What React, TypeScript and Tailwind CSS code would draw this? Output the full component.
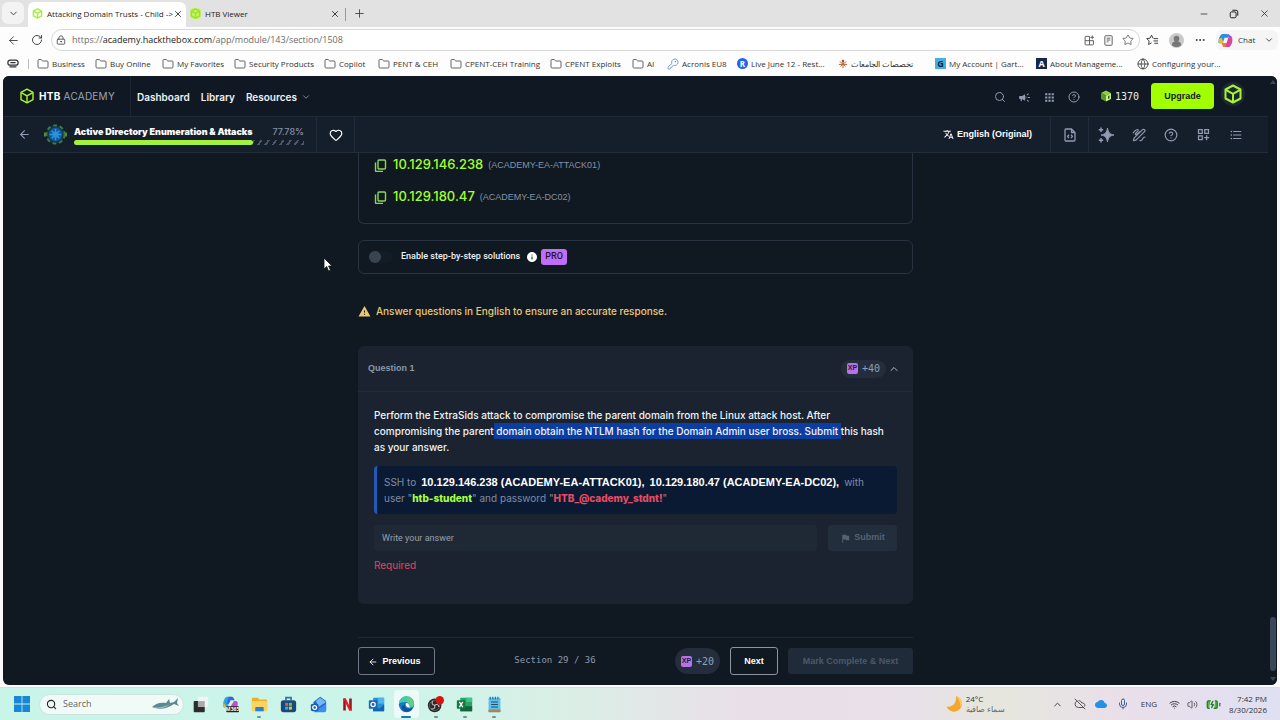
import type { ReactNode } from 'react';
import {
  ArrowLeft, BatteryCharging, ChevronDown, ChevronUp, CircleHelp, CloudOff, Ellipsis, Folder, Globe,
  Heart, KeyRound, LockKeyhole, Mic, Minus, Plus, RotateCw, Search, Star, Volume2, Wifi, X,
} from 'lucide-react';
import {
  MdApps, MdCampaign, MdCloud, MdFlag, MdFormatListBulleted, MdInfo, MdOutlineDashboardCustomize, MdTranslate, MdWarning,
} from 'react-icons/md';

const ui = "font-['Open_Sans','Noto_Sans',sans-serif]";
const sans = "font-['Liberation_Sans',Arial,sans-serif]";
const inter = "font-['Inter','Liberation_Sans',sans-serif]";
const roboto = "font-['Roboto','Liberation_Sans',sans-serif]";
const mono = "font-['DejaVu_Sans_Mono','Liberation_Mono',monospace]";

function Cube({ className = '', stroke = 2 }: { className?: string; stroke?: number }) {
  return (
    <svg viewBox="0 0 24 24" className={className} fill="none" stroke="currentColor" strokeWidth={stroke} strokeLinejoin="round">
      <path d="M12 1.8 21 6.6v10.8l-9 4.8-9-4.8V6.6z" />
      <path d="m3.4 7 8.6 4.8L20.600 7M12 11.800V22" />
    </svg>
  );
}

function SolidCube({ className = '' }: { className?: string }) {
  return (
    <svg viewBox="0 0 24 24" className={className}>
      <path d="M12 1 22 6l-10 5L2 6z" fill="#8fd03c" />
      <path d="M2 6l10 5v12L2 18z" fill="#5d9a2c" />
      <path d="M22 6l-10 5v12l10-5z" fill="#c6f58c" />
      <path d="M16 12l3-1.500v6L16 18z" fill="#33561d" />
    </svg>
  );
}

function Tab({ title, active = false, width }: { title: string; active?: boolean; width: string }) {
  return (
    <div className={`flex items-center pr-[5px] pb-[2px] pl-1 ${width} ${active ? 'rounded-t-md bg-white' : ''}`}>
      <Cube className={`size-[11px] shrink-0 ${active ? 'text-[#a5ee3a]' : 'rounded-sm bg-[#c4f56a] text-[#9ddf2b]'}`} stroke={3} />
      <span className="ml-1 flex-1 text-[8px] whitespace-nowrap text-[#222]">{title}</span>
      <button aria-label={`Close ${title}`} className="text-[#222]"><X className="size-[10px]" /></button>
    </div>
  );
}

const folderIcon = <Folder className="size-3 shrink-0 text-[#555]" strokeWidth={1.800} />;
const bookmarks: { label: string; icon: ReactNode; width: string }[] = [
  { label: 'Business', icon: folderIcon, width: 'w-[58px]' },
  { label: 'Buy Online', icon: folderIcon, width: 'w-[67px]' },
  { label: 'My Favorites', icon: folderIcon, width: 'w-[72px]' },
  { label: 'Security Products', icon: folderIcon, width: 'w-[90px]' },
  { label: 'Copilot', icon: folderIcon, width: 'w-[54px]' },
  { label: 'PENT & CEH', icon: folderIcon, width: 'w-[72px]' },
  { label: 'CPENT-CEH Training', icon: folderIcon, width: 'w-[100px]' },
  { label: 'CPENT Exploits', icon: folderIcon, width: 'w-[82px]' },
  { label: 'AI', icon: folderIcon, width: 'w-[35px]' },
  { label: 'Acronis EU8', icon: <KeyRound className="size-3 shrink-0 text-[#6a93c8]" strokeWidth={1.800} />, width: 'w-[70px]' },
  {
    label: 'Live June 12 - Rest...',
    icon: <span className="flex size-[11px] shrink-0 items-center justify-center rounded-full bg-[#2563eb] text-[8px] font-bold text-white">R</span>,
    width: 'w-[101px]',
  },
  {
    label: 'تخصصات الجامعات',
    icon: (
      <svg viewBox="0 0 12 12" className="size-[10px] shrink-0">
        <path d="M6 1v10M2 3l4 3 4-3M1 6.500h10M3 9l3-3 3 3" stroke="#b56a3a" strokeWidth="1.200" fill="none" />
        <circle cx="6" cy="2.500" r="1.500" fill="#a44" />
      </svg>
    ),
    width: 'w-[97px]',
  },
  {
    label: 'My Account | Gart...',
    icon: <span className="flex size-[11px] shrink-0 items-center justify-center bg-[#45b0dc] text-[9px] font-bold text-[#0b2545]">G</span>,
    width: 'w-[101px]',
  },
  {
    label: 'About Manageme...',
    icon: <span className="flex size-[11px] shrink-0 items-center justify-center bg-[#16264d] text-[9px] font-bold text-white">A</span>,
    width: 'w-[101px]',
  },
  { label: 'Configuring your...', icon: <Globe className="size-3 shrink-0 text-[#444]" strokeWidth={1.800} />, width: 'w-[90px]' },
];

function BrowserChrome() {
  return (
    <header className={`${ui} text-[#333]`}>
      <div className="flex h-[27px] items-stretch bg-[#e2e2e2] pt-[2px] pr-2">
        <button aria-label="Tab actions" className="mr-1 ml-[2px] flex h-[22px] w-[22px] items-center justify-center rounded-md bg-[#f3f3f3]">
          <ChevronDown className="size-[11px]" />
        </button>
        <Tab title="Attacking Domain Trusts - Child ->" active width="w-[158px]" />
        <Tab title="HTB Viewer" width="w-[159px]" />
        <div className="my-[6px] w-px bg-[#999]" />
        <button aria-label="New tab" className="ml-[7px] pb-[2px]"><Plus className="size-[13px]" strokeWidth={1.500} /></button>
        <div className="ml-auto flex items-center gap-5 pr-[2px] pb-[2px]">
          <button aria-label="Minimize"><Minus className="size-[10px]" /></button>
          <button aria-label="Restore">
            <svg viewBox="0 0 12 12" className="size-[10px]" fill="none" stroke="#222" strokeWidth="1.200">
              <rect x="1.500" y="3.500" width="7" height="7" rx="1.500" />
              <path d="M4 1.500h4.500a2 2 0 0 1 2 2V8" />
            </svg>
          </button>
          <button aria-label="Close window"><X className="size-[11px]" strokeWidth={1.800} /></button>
        </div>
      </div>

      <div className="flex h-[26px] items-center bg-[#fdfdfd] pr-[2px] pl-[7px]">
        <button aria-label="Back"><ArrowLeft className="size-[13px]" strokeWidth={1.600} /></button>
        <button aria-label="Reload" className="ml-[11px]"><RotateCw className="size-3" strokeWidth={1.800} /></button>
        <div className="ml-2 flex h-[22px] flex-1 items-center rounded-full border border-[#d8d8d8] bg-white pr-[5px] pl-1">
          <LockKeyhole className="size-[10px] text-[#444]" />
          <p className="ml-[6px] flex-1 text-[9px] text-[#6b6b6b]">
            https://<span className="text-[#222]">academy.hackthebox.com</span>/app/module/143/section/1508
          </p>
          <div className="flex items-center gap-2 text-[#555]">
            <svg viewBox="0 0 12 12" className="size-[11px]" fill="none" stroke="currentColor">
              <path d="M6 1.500H2a.800.800 0 0 0-.8.800V10a.800.800 0 0 0 .8.800h7.500a.800.800 0 0 0 .8-.8V6M6 1.500V10.800M1.200 6.200h9M9 .500v4M7 2.500h4" />
            </svg>
            <svg viewBox="0 0 12 12" className="size-[11px]" fill="none" stroke="currentColor">
              <rect x="2" y=".8" width="8" height="10.400" rx="1" />
              <path d="M4 3.500h4M4 5.500h4M4 7.500h2" />
            </svg>
            <Star className="size-3" strokeWidth={1.600} />
          </div>
        </div>
        <div className="ml-[6px] flex items-center gap-[10px]">
          <svg viewBox="0 0 14 12" className="h-3 w-[13px]" fill="none" stroke="#333" strokeLinejoin="round">
            <path d="M8 4.200 7.500 4 6 .800 4.400 4 .8 4.500l2.600 2.600-.6 3.700L6 9M8.500 4.500H13M8 7h5M9 9.500h4" />
          </svg>
          <svg viewBox="0 0 16 16" className="size-[15px]">
            <circle cx="8" cy="8" r="8" fill="#c9c9c9" />
            <circle cx="8" cy="6" r="3" fill="#777" />
            <path d="M3 13a5 4.500 0 0 1 10 0 8 8 0 0 1-10 0" fill="#777" />
          </svg>
          <Ellipsis className="size-3" />
          <button className="flex h-5 w-[62px] items-center rounded-md bg-[#f5f5f5] pl-[2px] text-[8px]">
            <svg viewBox="0 0 16 16" className="mr-[5px] size-[15px]">
              <path d="M5 1h5l2 4H7L5 11H2C0 11 .500 8 1 6s2-5 4-5" fill="#2590e8" />
              <path d="M1 6l3-1 2 6H3C1 11 .500 9 1 6" fill="#f4b62c" />
              <path d="M11 15H6l-2-4h5l2-6h3c2 0 1.500 3 1 5s-2 5-4 5" fill="#d8459c" />
              <path d="M10 1l2 4h3c1-1-1-1-2-2s-1-2-3-2" fill="#7a4be0" />
              <path d="M4 11h5l-1 4H6c-1 0-1-2-2-4" fill="#f07a3c" />
            </svg>
            Chat
            <ChevronDown className="mr-1 ml-auto size-[10px]" />
          </button>
        </div>
      </div>

      <nav aria-label="Bookmarks" className="flex h-[23px] items-center bg-[#fdfdfd] pb-[2px] pl-[7px]">
        <svg viewBox="0 0 14 10" className="h-[9px] w-3" fill="none" stroke="#333" strokeWidth="1.400">
          <rect x="1" y="1" width="12" height="6" rx="3" />
          <path d="M4 4h6M3 9h8" />
        </svg>
        <div className="mr-2 ml-[9px] h-[10px] w-px bg-[#bbb]" />
        {bookmarks.map((b) => (
          <a key={b.label} href="#" className={`flex shrink-0 items-center gap-[3px] text-[8px] whitespace-nowrap text-[#333] ${b.width}`}>
            {b.icon}
            {b.label}
          </a>
        ))}
      </nav>
    </header>
  );
}

function SiteHeader() {
  return (
    <div className={`${inter} flex h-[41px] items-stretch border-b border-[#1f2a37] bg-[#101923]`}>
      <a href="#" className="flex w-[128px] items-center gap-1 border-r border-[#1c2632] pl-4 text-[10px] tracking-wide text-white">
        <Cube className="size-4 text-[#a8f52d]" stroke={2.200} />
        <span><b className="font-bold">HTB</b> <span className="text-[#9aa5b5]">ACADEMY</span></span>
      </a>
      <nav className="flex items-center gap-[11px] pt-[2px] pl-[6px] text-[10px] font-semibold text-[#eef1f5]">
        <a href="#">Dashboard</a>
        <a href="#">Library</a>
        <button className="flex items-center gap-1">Resources <ChevronDown className="size-[10px] text-[#8e9bb0]" /></button>
      </nav>
      <div className="ml-auto flex items-center pr-[23px] text-[#8e9bb0]">
        <div className="flex items-center gap-3 pt-[2px]">
          <button aria-label="Search"><Search className="size-3" /></button>
          <button aria-label="Announcements"><MdCampaign className="size-[13px]" /></button>
          <button aria-label="Apps"><MdApps className="size-[13px]" /></button>
          <button aria-label="Help"><CircleHelp className="size-3" /></button>
        </div>
        <div className={`${mono} ml-5 flex items-center gap-[3px] text-[10px] text-[#e6ebf2]`}>
          <SolidCube className="size-3" />
          1370
        </div>
        <button className={`${sans} ml-3 h-[26px] w-[63px] rounded-sm bg-[#a2ff00] pt-[2px] text-[9px] font-bold text-[#16202b]`}>Upgrade</button>
        <button aria-label="Account" className="mb-1 ml-[7px] flex size-6 items-center justify-center rounded-full bg-[#1d2835]">
          <Cube className="size-5 text-[#a8f52d]" stroke={2.400} />
        </button>
      </div>
    </div>
  );
}

function ModuleBar() {
  return (
    <div className={`${inter} flex h-[36px] items-stretch border-b border-[#222d3b] bg-[#151e2b]`}>
      <div className="flex items-center pl-[15px]">
        <button aria-label="Back to module"><ArrowLeft className="size-[13px] text-[#8e9bb0]" /></button>
        <svg viewBox="0 0 24 24" className="ml-[13px] size-[23px]">
          <circle cx="12" cy="12" r="9.500" fill="#123a46" stroke="#3f7d3a" strokeWidth="2" strokeDasharray="4 3" />
          <circle cx="12" cy="12" r="7" fill="#1257a0" />
          <path d="M12 6v12M6 12h12M8 8l8 8M16 8l-8 8" stroke="#2b9be6" strokeWidth="1.500" />
          <circle cx="12" cy="12" r="3" fill="#2f8fe0" />
          <path d="M1 10v4M23 10v4" stroke="#5e8a34" strokeWidth="2" />
        </svg>
        <div className="ml-[7px] w-[230px]">
          <div className="flex items-center justify-between text-[9px] leading-4">
            <span className="font-black whitespace-nowrap text-white">Active Directory Enumeration &amp; Attacks</span>
            <span className="font-medium text-[#8591a5]">77.78%</span>
          </div>
          <div className="flex h-[5px] w-full" role="progressbar" aria-label="Module progress" aria-valuenow={77.78}>
            <div className="z-10 w-[78%] rounded-full bg-[#a4f13d]" />
            <div className="flex-1 bg-[repeating-linear-gradient(125deg,#4a5666_0px,#4a5666_2px,transparent_2px,transparent_6px)]" />
          </div>
        </div>
      </div>
      <button aria-label="Favorite" className="ml-3 flex w-[39px] items-center justify-center border-x border-[#222d3b] text-white">
        <Heart className="size-[14px]" />
      </button>
      <button className={`${sans} ml-auto flex items-center gap-[3px] pr-[18px] text-[9px] font-bold text-white`}>
        <MdTranslate className="size-[11px]" />
        English (Original)
      </button>
      <button aria-label="Source" className="flex w-[39px] items-center justify-center border-x border-[#222d3b] text-[#8e9bb0]">
        <svg viewBox="0 0 14 14" className="size-[14px]" fill="none" stroke="currentColor" strokeWidth="1.300" strokeLinejoin="round">
          <path d="M8.500 1H3a1 1 0 0 0-1 1v10a1 1 0 0 0 1 1h8a1 1 0 0 0 1-1V4.500zM8.500 1v3.500H12M6 6.800 4.500 8.400 6 10M8 6.800l1.500 1.600L8 10" />
        </svg>
      </button>
      <div className="flex items-center gap-[18px] pr-[25px] pl-[9px] text-[#8e9bb0]">
        <button aria-label="Assistant">
          <svg viewBox="0 0 16 16" className="size-4" fill="currentColor">
            <path d="M9.500 1c1 4.800 2 6 6.500 7-4.500 1-5.500 2.200-6.500 7C8.500 10.200 7.500 9 3 8c4.500-1 5.500-2.200 6.500-7" stroke="currentColor" strokeWidth=".9" strokeLinejoin="round" />
            <path d="M3 .500v4.500M.8 2.700h4.400M3 11v4.500M.8 13.200h4.400" stroke="currentColor" strokeWidth="1.500" />
          </svg>
        </button>
        <button aria-label="Notes">
          <svg viewBox="0 0 14 14" className="size-[14px]" fill="none" stroke="currentColor" strokeWidth="1.200" strokeLinejoin="round" strokeLinecap="round">
            <path d="M1.200 4.800C3 2.500 5.500.800 6.300 1.800S2.500 5.500 3.500 6.500 7.500 3.500 8 3.800" />
            <path d="M4 12.200l-2.500.5.5-2.500L10.500 1.700a1.300 1.300 0 0 1 2 2z" />
            <path d="M8 12.500c1 .5 2-.5 2.500-1.500s1.500-2 2.500-2" />
          </svg>
        </button>
        <button aria-label="Support"><CircleHelp className="size-[14px]" /></button>
        <button aria-label="Widgets"><MdOutlineDashboardCustomize className="size-[15px]" /></button>
        <button aria-label="Contents"><MdFormatListBulleted className="size-[14px]" /></button>
      </div>
    </div>
  );
}

function Target({ ip, host }: { ip: string; host: string }) {
  return (
    <div className="flex h-6 items-center">
      <button aria-label={`Copy ${ip}`} className="mr-[6px] text-[#8fd84a]">
        <svg viewBox="0 0 13 13" className="size-[13px]" fill="none" stroke="currentColor" strokeWidth="1.400">
          <rect x="4" y="1" width="7.500" height="9" rx="1" />
          <path d="M1.500 3.500v8a1 1 0 0 0 1 1H9" />
        </svg>
      </button>
      <span className={`${inter} text-[13px] font-medium text-[#a1ff2e]`}>{ip}</span>
      <span className="ml-[5px] pt-[2px] text-[9px] text-[#8592a8]">({host})</span>
    </div>
  );
}

function Points({ value }: { value: number }) {
  return (
    <span className={`${mono} flex min-h-[18px] items-center gap-1 rounded-full bg-[#232d3b] px-[6px] text-[10px] text-[#93a0b4]`}>
      <span className={`${sans} flex size-[11px] items-center justify-center rounded-[2px] bg-[#b473e6] text-[7px] font-bold text-[#2a1740]`}>XP</span>
      +{value}
    </span>
  );
}

function Lesson() {
  return (
    <main className={`${sans} mx-auto w-full max-w-[555px]`}>
      <section className="flex flex-col gap-2 rounded-b-md border border-t-0 border-[#283341] pb-[14px] pl-[15px]">
        <Target ip="10.129.146.238" host="ACADEMY-EA-ATTACK01" />
        <Target ip="10.129.180.47" host="ACADEMY-EA-DC02" />
      </section>

      <section className={`${roboto} mt-4 flex h-[34px] items-center rounded-md border border-[#283341] pl-[10px]`}>
        <label className="flex items-center text-[9px] font-medium text-[#edf0f4]">
          <input type="checkbox" role="switch" className="peer sr-only" />
          <span className="mr-2 flex h-3 w-6 items-center rounded-full bg-[#121c27]">
            <span className="size-3 rounded-full bg-[#3a4350]" />
          </span>
          Enable step-by-step solutions
        </label>
        <MdInfo className="ml-[6px] size-3 text-white" />
        <span className="ml-[3px] flex h-4 items-center rounded-[3px] bg-[#c06ef5] px-1 text-[9px] font-medium text-[#1c1230]">PRO</span>
      </section>

      <p className={`${inter} mt-[29px] flex h-4 items-center gap-[5px] text-[10px] font-medium text-[#ecc873]`}>
        <MdWarning className="size-[13px]" />
        Answer questions in English to ensure an accurate response.
      </p>

      <section className="mt-[27px] rounded-md bg-[#1a232f] pb-[31px]">
        <div className="flex h-[46px] items-center justify-between border-b border-[#212c39] pr-[13px] pl-[10px]">
          <h2 className="text-[9px] font-bold text-[#8b97a9]">Question 1</h2>
          <div className="flex items-center gap-[2px]">
            <Points value={40} />
            <button aria-label="Collapse"><ChevronUp className="size-3 text-[#b5bfcc]" /></button>
          </div>
        </div>
        <div className="px-4 pt-[15px]">
          <p className={`${inter} text-[10px] leading-4 font-medium text-[#f1f4f8]`}>
            Perform the ExtraSids attack to compromise the parent domain from the Linux attack host. After
            <br />
            compromising the parent
            <span className="bg-[#0b3da3] py-[2px]"> domain obtain the NTLM hash for the Domain Admin user bross. Submit </span>
            this hash
            <br />
            as your answer.
          </p>
          <div className={`${inter} mt-[11px] rounded-sm border-l-[3px] border-[#2559b8] bg-[#0b1a33] py-2 pl-[7px] text-[10px] leading-4 text-[#7f8ca3]`}>
            <p className="flex gap-[5px]">
              SSH to
              <b className={`${sans} text-[11px] text-white`}>10.129.146.238 (ACADEMY-EA-ATTACK01),</b>
              <b className={`${sans} text-[11px] text-white`}>10.129.180.47 (ACADEMY-EA-DC02),</b>
              with
            </p>
            <p>
              user "<b className="font-extrabold text-[#a8ff3a]">htb-student</b>" and password "
              <b className="font-extrabold text-[#e84a63]">HTB_@cademy_stdnt!</b>"
            </p>
          </div>
          <form className="mt-[11px] flex gap-[11px]" onSubmit={(e) => e.preventDefault()}>
            <input
              aria-label="Write your answer"
              placeholder="Write your answer"
              className={`${roboto} h-[26px] min-w-0 flex-1 rounded-[3px] bg-[#1f2835] px-2 text-[9px] text-white placeholder:text-[#95a0b0]`}
            />
            <button className="flex h-[26px] w-[69px] items-center justify-center gap-[3px] rounded-[3px] bg-[#222e3c] text-[9px] font-bold text-[#566274]">
              <MdFlag className="size-[11px]" />
              Submit
            </button>
          </form>
          <p className={`${inter} mt-[6px] text-[10px] leading-4 text-[#e0475d]`}>Required</p>
        </div>
      </section>

      <nav aria-label="Sections" className="mt-[33px] flex items-center border-t border-[#1e2935] pt-[9px] pb-[10px]">
        <button className="flex h-7 w-[77px] items-center justify-center gap-1 rounded-[3px] border border-[#6d7887] pt-px pr-1 text-[9px] font-bold text-white">
          <ArrowLeft className="size-[10px]" />
          Previous
        </button>
        <span className={`${mono} flex-1 text-center text-[9px] text-[#8d99ab]`}>Section 29 / 36</span>
        <div className="flex h-[26px] items-stretch"><Points value={20} /></div>
        <button className="mr-[10px] ml-[10px] h-7 w-12 rounded-[3px] border border-[#8b95a3] pt-[2px] text-[9px] font-bold text-white">Next</button>
        <button disabled className="h-[26px] w-[125px] rounded-[3px] bg-[#1f2b39] pt-[2px] text-[9px] font-bold text-[#4c596b]">Mark Complete &amp; Next</button>
      </nav>
    </main>
  );
}

const apps: { name: string; running?: boolean; active?: boolean; icon: ReactNode }[] = [
  { name: 'Task view', icon: <><rect x="2" y="6" width="13" height="13" rx="1" fill="#2c2c2c" /><rect x="7" y="1" width="12" height="12" rx="1" fill="#f3f3f3" /><rect x="7" y="6" width="8" height="7" fill="#aaa" /></> },
  { name: 'Microsoft 365', icon: <><path d="M6 1h5L6 14H4C0 14 1 9 2 6s2-5 4-5" fill="#2ca6dd" /><path d="M11 1c3 0 3 3 4 4h-5L8 9H5l3-8" fill="#3c62dc" /><path d="M14 6h2c3 0 3 3 2 6s-2 4-4 4H8z" fill="#c54fc8" /><path d="M2 8l4 6H4c-3 0-3-3-2-6" fill="#f2b13a" /><rect x="5" y="12" width="15" height="7" rx="1" fill="#222" /><text x="12.500" y="17.600" fontSize="6" fontWeight="bold" textAnchor="middle" fill="#fff">M365</text></> },
  { name: 'File Explorer', running: true, icon: <><path d="M1 3a1 1 0 0 1 1-1h6l2 2h8a1 1 0 0 1 1 1v12H1z" fill="#eab02b" /><rect x="1" y="6" width="18" height="12" rx="1" fill="#fbd45e" /><path d="M5 18v-4a1 1 0 0 1 1-1h8a1 1 0 0 1 1 1v4z" fill="#2c7fd6" /></> },
  { name: 'Microsoft Store', icon: <><path d="M7 5V2h6v3" stroke="#2778b8" strokeWidth="2" fill="none" /><rect x="1" y="5" width="18" height="14" rx="3" fill="#174a78" /><path d="M6 8h3.500v3.500H6z" fill="#e85b3c" /><path d="M10.500 8H14v3.500h-3.500z" fill="#7cc043" /><path d="M6 12.500h3.500V16H6z" fill="#36a7e8" /><path d="M10.500 12.500H14V16h-3.500z" fill="#f6c12f" /></> },
  { name: 'Outlook new', icon: <><path d="M4 7l8-6 7 5v11H5z" fill="#2465c4" /><path d="M7 6l5-4 7 5-9 6z" fill="#72b9f5" /><path d="M5 18l14-9v8a2 2 0 0 1-2 2H5z" fill="#3d8cf0" /><rect x="1" y="9" width="9" height="9" rx="2" fill="#155fb6" /><circle cx="5.500" cy="13.500" r="2.300" fill="none" stroke="#fff" strokeWidth="1.500" /></> },
  { name: 'Netflix', icon: <><path d="M5 3h3v14H5zM12 3h3v14h-3z" fill="#a60d16" /><path d="M5 3h3l7 14h-3z" fill="#e31b25" /></> },
  { name: 'Outlook', icon: <><rect x="6" y="2" width="13" height="16" rx="1" fill="#2b90d9" /><path d="M12 2h7v7h-7z" fill="#51b4ee" /><path d="M6 10l7 5 6-5v8H6z" fill="#1764ae" /><rect x="1" y="5" width="10" height="10" rx="1" fill="#1467ba" /><circle cx="6" cy="10" r="2.500" fill="none" stroke="#fff" strokeWidth="1.500" /></> },
  { name: 'Edge', running: true, active: true, icon: <><circle cx="10" cy="10" r="9" fill="#167ac0" /><path d="M1 9a9 9 0 0 1 18 0c0 3-3 5-6 4 1-3-1-6-4-6S2 8 1 9" fill="#42c8b7" /><path d="M10 1a9 9 0 0 1 9 9c-1 3-4 4-6 3 1-2 0-5-3-6z" fill="#73d35c" opacity=".55" /><path d="M8 10c0 5 4 6 9 4-2 4-7 6-11 3-3-3-2-6 2-7" fill="#1550a0" /><path d="M9 10c0 3 3 4 6 3.500-1-.5-2-1-2-2.500 0-3-4-4-4-1" fill="#f4fbff" /></> },
  { name: 'OBS Studio', running: true, icon: <><circle cx="9" cy="11" r="8" fill="#292929" /><circle cx="9" cy="11" r="6" fill="none" stroke="#666" /><path d="M9 11c-3 0-4-3-2-5M9 11c2-2 5-1 5 2M9 11c1 3-1 5-4 4" stroke="#ccc" strokeWidth="1.200" fill="none" /><circle cx="15" cy="5" r="5" fill="#dc1212" /></> },
  { name: 'Excel', running: true, icon: <><rect x="5" y="2" width="14" height="16" rx="1" fill="#27a362" /><path d="M12 2h7v5h-7z" fill="#41c588" /><path d="M5 12h14v6H5z" fill="#17633a" /><rect x="1" y="5" width="10" height="10" rx="1" fill="#107a40" /><path d="m4 7 4 6M8 7l-4 6" stroke="#fff" strokeWidth="1.600" /></> },
  { name: 'Notepad', running: true, icon: <><rect x="3" y="2" width="14" height="17" rx="1" fill="#5ec1ea" /><path d="M3 16h14v3H3z" fill="#b77f4a" /><path d="M5 1v3M8 1v3M11 1v3M14 1v3" stroke="#246b94" strokeWidth="1.300" /><path d="M6 7h8M6 10h8M6 13h8" stroke="#1c4d73" strokeWidth="1.300" /></> },
];

function Taskbar() {
  return (
    <footer className={`${ui} flex h-[33px] items-center border-t border-[#cde3dc] bg-[linear-gradient(90deg,#c9f4e8_0%,#cdf5e9_32%,#dbeee6_45%,#eadfe9_58%,#e9e0ea_70%,#e5e6dd_78%,#eadfea_88%,#dfe0f2_100%)] pr-[13px] pl-[14px] text-[#333]`}>
      <button aria-label="Start">
        <svg viewBox="0 0 16 16" className="size-4" fill="#1a86d6">
          <path d="M0 0h7.600v7.600H0zM8.400 0H16v7.600H8.400zM0 8.400h7.600V16H0zM8.400 8.400H16V16H8.400z" />
        </svg>
      </button>
      <label className="ml-[9px] flex h-[21px] w-[145px] items-center rounded-full border border-[#cfe3de] bg-[#f0fbf8] pr-1 pl-[6px]">
        <Search className="size-[11px] shrink-0 text-[#222]" strokeWidth={2.400} />
        <input aria-label="Search" placeholder="Search" className="ml-[6px] w-0 flex-1 text-[9px] placeholder:text-[#666]" />
        <svg viewBox="0 0 28 14" className="h-[14px] w-7 shrink-0">
          <path d="M1 10c4-4 9-5 14-4l3-4 1 4 4-1 4-4-1 5 2 3-5-2c-7 5-15 6-22 3" fill="#5c8992" />
          <path d="M2 10c5 1 12 0 17-3-4 4-11 6-17 3" fill="#a8c3c5" />
        </svg>
      </label>
      <div className="ml-[2px] grid w-[323px] grid-cols-11 items-center">
        {apps.map((a) => (
          <button key={a.name} aria-label={a.name} className={`mx-[2px] flex h-7 flex-col items-center justify-end rounded-sm ${a.active ? 'bg-[#eefaf8]' : ''}`}>
            <svg viewBox="0 0 20 20" className="size-[17px]">{a.icon}</svg>
            <span className={`mt-[3px] h-[2px] rounded-full ${a.active ? 'w-[10px] bg-[#1674c4]' : a.running ? 'w-1 bg-[#78908c]' : 'w-1'}`} />
          </button>
        ))}
      </div>
      <div className="ml-auto flex items-center">
        <svg viewBox="0 0 16 16" className="size-4">
          <path d="M10 0a8 8 0 1 1-9.500 10.500C6 12 11 7 10 0" fill="#f3a72e" />
          <path d="M10 0a8 8 0 0 1 4.500 12C15 8 13 3 10 0" fill="#f9cf5c" />
        </svg>
        <div className="ml-1 w-[86px] text-[8px] leading-[10px]">
          <p>24°C</p>
          <p><bdi className="text-[#666]">سماء صافية</bdi></p>
        </div>
        <ChevronUp className="size-[11px]" />
        <CloudOff className="ml-[11px] size-3" strokeWidth={1.600} />
        <MdCloud className="ml-[9px] size-3 text-[#2292e8]" />
        <Mic className="ml-[10px] size-3 text-[#3c6390]" />
        <span className="mx-3 text-[8px]">ENG</span>
        <Wifi className="size-[11px]" />
        <Volume2 className="ml-[7px] size-[11px]" strokeWidth={1.600} />
        <BatteryCharging className="ml-2 size-[15px] text-[#27782b]" fill="#55b648" />
        <div className="w-[46px] text-right text-[8px] leading-[11px] whitespace-nowrap">
          <p>7:42 PM</p>
          <p>8/30/2026</p>
        </div>
      </div>
    </footer>
  );
}

export default function App() {
  return (
    <div className="relative flex h-screen flex-col overflow-hidden bg-[#fafafa]">
      <BrowserChrome />
      <div className="mx-[3px] mb-[2px] flex min-h-0 flex-1 overflow-hidden rounded-md bg-[#101922]">
        <div className="flex min-w-0 flex-1 flex-col">
          <SiteHeader />
          <ModuleBar />
          <div className="min-h-0 flex-1 overflow-hidden"><Lesson /></div>
        </div>
        <div aria-hidden="true" className="flex w-[9px] flex-col items-center justify-between bg-[#101922] py-1">
          <span className="border-x-[3px] border-b-4 border-x-transparent border-b-[#3b4654]" />
          <div className="flex flex-col items-center gap-[6px]">
            <span className="h-[54px] w-[6px] rounded-full bg-[#3b4757]" />
            <span className="border-x-[3px] border-t-4 border-x-transparent border-t-[#3b4654]" />
          </div>
        </div>
      </div>
      <Taskbar />
      <svg viewBox="0 0 10 15" className="pointer-events-none absolute top-[257px] left-[323px] h-[15px] w-[10px]">
        <path d="M1 1v11l2.700-2.500L5.500 14l2-.8-1.900-4.200H9z" fill="#fff" stroke="#111" strokeWidth=".8" />
      </svg>
    </div>
  );
}
